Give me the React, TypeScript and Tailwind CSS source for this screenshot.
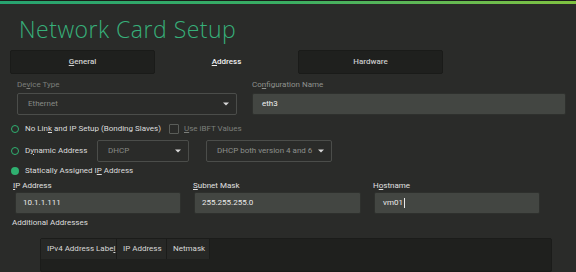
import React from "react";

const U = ({ children }: { children: React.ReactNode }) => <span className="underline underline-offset-1">{children}</span>;

const Arrow = () => (
  <svg width="6" height="4" viewBox="0 0 6 4" className="shrink-0">
    <path d="M0 0.5 L6 0.5 L3 3.5 Z" fill="#d8d8d8" />
  </svg>
);

const Radio = ({ filled }: { filled?: boolean }) =>
  filled ? (
    <span className="w-[8px] h-[8px] rounded-full bg-[#2fb070] shrink-0" />
  ) : (
    <span className="w-[8px] h-[8px] rounded-full border-[1.5px] border-[#2fb070] shrink-0" />
  );

export default function App() {
  return (
    <div
      className="w-[576px] h-[272px] overflow-hidden bg-[#2a2b29] text-[8px] leading-none text-[#dcdcdc] flex flex-col"
      style={{ fontFamily: "Roboto, 'Liberation Sans', sans-serif" }}
    >
      <div className="h-[4px] shrink-0 border-t border-[#1c1d1b] bg-gradient-to-r from-[#27a370] via-[#3aae62] to-[#80c340]" />
      <div
        className="mt-[11px] h-[28px] leading-[28px] pl-[19px] text-[23px] tracking-[0.5px] font-light text-[#37b07a] shrink-0"
        style={{ fontFamily: "'Open Sans', sans-serif" }}
      >
        Network Card Setup
      </div>
      <div className="mt-[7px] ml-[10px] flex h-[24px] shrink-0">
        <div className="w-[145px] bg-[#1f201e] border border-[#1a1b19] rounded-[2px] flex items-center justify-center font-medium text-[#d0d0d0]">
          <span><U>G</U>eneral</span>
        </div>
        <div className="w-[143px] flex items-center justify-center font-medium text-[#f0f0f0]">
          <span><U>A</U>ddress</span>
        </div>
        <div className="w-[145px] bg-[#1f201e] border border-[#1a1b19] rounded-[2px] flex items-center justify-center font-medium text-[#c8c8c8]">
          <span>Hardware</span>
        </div>
      </div>

      {/* labels row */}
      <div className="mt-[4px] h-[14px] flex items-center shrink-0 text-[#7c7f7b]">
        <div className="ml-[17px] w-[235px]">De<U>v</U>ice Type</div>
        <div className="text-[#8f928e]">Co<U>n</U>figuration Name</div>
      </div>
      <div className="mt-[1px] h-[22px] flex shrink-0">
        <div className="ml-[17px] w-[220px] border border-[#4b4d4a] rounded-[2px] flex items-center pl-[10px] pr-[7px] justify-between text-[#878a86]">
          <span>Ethernet</span>
          <Arrow />
        </div>
        <div className="ml-[15px] w-[314px] bg-[#434642] border border-[#2e302d] rounded-[2px] flex items-center pl-[9px] text-[#f0f0f0]">
          eth3
        </div>
      </div>

      {/* radio 1 */}
      <div className="mt-[4px] h-[20px] flex items-center shrink-0">
        <div className="ml-[11px] flex items-center gap-[6px]">
          <Radio />
          <span>No Lin<U>k</U> and IP Setup (Bonding Slaves)</span>
        </div>
        <div className="ml-[8px] flex items-center gap-[5px] text-[#7c7f7b]">
          <span className="w-[10px] h-[10px] border border-[#5a5d59] rounded-[1px]" />
          <span><U>U</U>se iBFT Values</span>
        </div>
      </div>

      {/* radio 2 */}
      <div className="mt-[1px] h-[22px] flex items-center shrink-0">
        <div className="ml-[11px] w-[86px] flex items-center gap-[6px]">
          <Radio />
          <span>D<U>y</U>namic Address</span>
        </div>
        <div className="w-[92px] h-[22px] border border-[#4b4d4a] rounded-[2px] flex items-center pl-[10px] pr-[7px] justify-between text-[#878a86]">
          <span>DHCP</span>
          <Arrow />
        </div>
        <div className="ml-[17px] w-[126px] h-[22px] border border-[#4b4d4a] rounded-[2px] flex items-center pl-[10px] pr-[7px] justify-between text-[#8d908c]">
          <span>DHCP both version 4 and 6</span>
          <Arrow />
        </div>
      </div>

      {/* radio 3 */}
      <div className="mt-[1px] h-[16px] flex items-center shrink-0">
        <div className="ml-[11px] flex items-center gap-[6px]">
          <Radio filled />
          <span>Statically Assigned I<U>P</U> Address</span>
        </div>
      </div>

      {/* labels */}
      <div className="h-[13px] flex items-center shrink-0 text-[#e0e0e0]">
        <div className="ml-[13px] w-[180px]"><U>I</U>P Address</div>
        <div className="w-[180px]"><U>S</U>ubnet Mask</div>
        <div>H<U>o</U>stname</div>
      </div>
      <div className="mt-[0px] h-[22px] flex shrink-0 text-[#eaeaea]">
        <div className="ml-[15px] w-[166px] bg-[#434642] border border-[#2e302d] rounded-[2px] flex items-center pl-[7px]">
          10.1.1.111
        </div>
        <div className="ml-[13px] w-[167px] bg-[#434642] border border-[#2e302d] rounded-[2px] flex items-center pl-[7px]">
          255.255.255.0
        </div>
        <div className="ml-[13px] w-[166px] bg-[#434642] border border-[#2e302d] rounded-[2px] flex items-center pl-[8px]">
          vm01<span className="ml-[1px] w-[1px] h-[10px] bg-[#eaeaea]" />
        </div>
      </div>

      <div className="mt-[2px] h-[14px] flex items-center pl-[12px] shrink-0 text-[#dedede]">
        Additional Addresses
      </div>

      <div className="mt-[8px] ml-[40px] w-[512px] flex-1 bg-[#1f201e] border border-[#1b1c1a] rounded-[2px] flex flex-col">
        <div className="flex h-[20px] text-[#d8d8d8]">
          <div className="w-[76px] bg-[#272826] border-r border-[#1b1c1a] flex items-center pl-[6px]">
            IPv4 Address Labe<U>l</U>
          </div>
          <div className="w-[50px] bg-[#272826] border-r border-[#1b1c1a] flex items-center pl-[6px]">
            IP Address
          </div>
          <div className="w-[43px] bg-[#272826] border-r border-[#1b1c1a] flex items-center pl-[6px]">
            Netmask
          </div>
        </div>
      </div>
    </div>
  );
}
